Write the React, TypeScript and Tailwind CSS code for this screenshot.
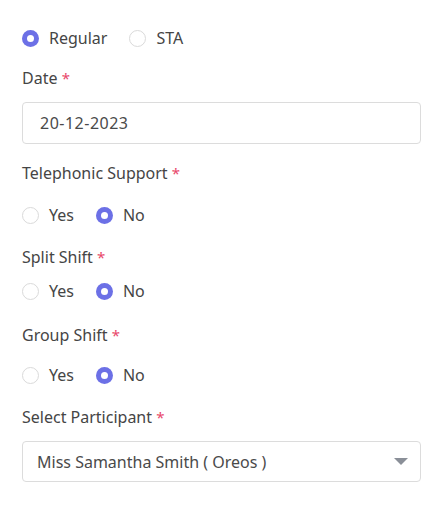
import React from "react";

const Radio = ({ checked, label }: { checked: boolean; label: string }) => (
  <div className="flex items-center">
    {checked ? (
      <span className="w-[17px] h-[17px] rounded-full bg-[#6c70e6] flex items-center justify-center">
        <span className="w-[7px] h-[7px] rounded-full bg-white" />
      </span>
    ) : (
      <span className="w-[17px] h-[17px] rounded-full border border-[#dadada] bg-white" />
    )}
    <span className="ml-[10px] text-[16px] leading-5 text-[#454545]">{label}</span>
  </div>
);

const Label = ({ text, className }: { text: string; className: string }) => (
  <div className={"text-[16px] leading-5 text-[#454545] " + className}>
    {text} <span className="text-[#e8476a] text-[15px]">*</span>
  </div>
);

const YesNo = ({ className }: { className: string }) => (
  <div className={"flex items-center h-5 gap-[22px] " + className}>
    <Radio checked={false} label="Yes" />
    <Radio checked={true} label="No" />
  </div>
);

export default function App() {
  return (
    <div
      className="w-[442px] h-[506px] bg-white pl-[22px] pt-[28px]"
      style={{ fontFamily: "'Noto Sans', sans-serif" }}
    >
      <div className="w-[399px]">
        <div className="flex items-center h-5 gap-[22px]">
          <Radio checked={true} label="Regular" />
          <Radio checked={false} label="STA" />
        </div>
        <Label text="Date" className="mt-[20px]" />
        <div className="mt-[14px] h-[42px] border border-[#dcdcdc] rounded-[4px] flex items-center pl-[17px] text-[16px] tracking-[0.5px] text-[#4a4a4a]">
          20-12-2023
        </div>
        <Label text="Telephonic Support" className="mt-[19px]" />
        <YesNo className="mt-[22px]" />
        <Label text="Split Shift" className="mt-[22px]" />
        <YesNo className="mt-[14px]" />
        <Label text="Group Shift" className="mt-[24px]" />
        <YesNo className="mt-[20px]" />
        <Label text="Select Participant" className="mt-[22px]" />
        <div className="mt-[14px] h-[41px] border border-[#dcdcdc] rounded-[4px] flex items-center justify-between pl-[14px] pr-[12px] text-[16px] text-[#4a4a4a]">
          <span>Miss Samantha Smith ( Oreos )</span>
          <svg width="14" height="8" viewBox="0 0 14 8">
            <path d="M0 0 L14 0 L7 7 Z" fill="#8a8f98" />
          </svg>
        </div>
      </div>
    </div>
  );
}
